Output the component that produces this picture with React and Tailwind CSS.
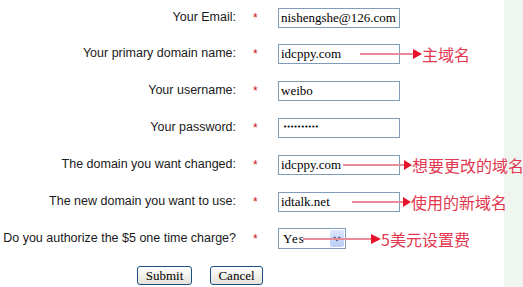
const rows = [
  { label: "Your Email:", value: "nishengshe@126.com", h: "h-[35px]" },
  {
    label: "Your primary domain name:",
    value: "idcppy.com",
    h: "h-[37px]",
    note: { left: 82, line: 53, head: 9, text: "主域名" },
  },
  { label: "Your username:", value: "weibo", h: "h-[37px]" },
  { label: "Your password:", value: "••••••••••", h: "h-[37px]", password: true },
  {
    label: "The domain you want changed:",
    value: "idcppy.com",
    h: "h-[37px]",
    note: { left: 65, line: 61, head: 8, text: "想要更改的域名" },
  },
  {
    label: "The new domain you want to use:",
    value: "idtalk.net",
    h: "h-[37px]",
    note: { left: 74, line: 51, head: 8, text: "使用的新域名" },
  },
];

const Note = ({ note }) => (
  <div
    className="absolute top-1/2 -translate-y-1/2 flex items-center z-10"
    style={{ left: note.left }}
  >
    <svg width={note.line + note.head} height="12" viewBox={`0 0 ${note.line + note.head} 12`}>
      <line x1="0" y1="6" x2={note.line + 1} y2="6" stroke="#e98c9a" strokeWidth="2" />
      <polygon points={`${note.line},1 ${note.line + note.head},6 ${note.line},11`} fill="#e5132c" />
    </svg>
    <span
      className="text-[16px] leading-none text-[#e2374f] whitespace-nowrap"
      style={{ fontFamily: '"Noto Sans CJK SC", sans-serif' }}
    >
      {note.text}
    </span>
  </div>
);

const Label = ({ children }) => (
  <div className="w-[236px] text-right text-[12.5px] text-[#1a1a1a] whitespace-nowrap font-['Liberation_Sans',sans-serif]">
    {children}
  </div>
);

const Star = () => (
  <div className="w-[42px] pl-[17px] text-[12px] text-[#cc1122] font-['Liberation_Sans',sans-serif]">*</div>
);

export default function App() {
  return (
    <div className="flex w-[523px] h-[287px] overflow-hidden bg-white">
      <div className="w-[504px] flex flex-col">
        {rows.map((r) => (
          <div key={r.label} className={`${r.h} shrink-0 flex items-center`}>
            <Label>{r.label}</Label>
            <Star />
            <div className="relative">
              <div className="w-[122px] h-[20px] border border-[#7f9db9] bg-white flex items-center pl-[2px] overflow-hidden">
                {r.password ? (
                  <span className="pl-[2px] text-[7px] leading-none tracking-[-0.6px] text-black font-['DejaVu_Sans',sans-serif]">
                    {r.value}
                  </span>
                ) : (
                  <span className="text-[13px] leading-none text-black font-['Liberation_Serif',serif] whitespace-nowrap">
                    {r.value}
                  </span>
                )}
              </div>
              {r.note && <Note note={r.note} />}
            </div>
          </div>
        ))}

        <div className="h-[37px] shrink-0 flex items-center">
          <Label>Do you authorize the $5 one time charge?</Label>
          <Star />
          <div className="relative">
            <div className="w-[68px] h-[21px] border border-[#7f9db9] bg-white flex items-center">
              <span className="pl-[4px] text-[13px] leading-none tracking-[1px] text-black font-['Liberation_Serif',serif]">
                Yes
              </span>
              <div className="ml-auto mr-[1px] w-[14px] h-[17px] bg-linear-to-b from-[#dbe5fd] to-[#bccef8] rounded-[2px] flex items-center justify-center">
                <svg width="8" height="6" viewBox="0 0 8 6">
                  <path d="M1 1 L4 4 L7 1" fill="none" stroke="#4d6185" strokeWidth="2" />
                </svg>
              </div>
            </div>
            <Note note={{ left: 25, line: 68, head: 10, text: "5美元设置费" }} />
          </div>
        </div>

        <div className="h-[37px] shrink-0 flex items-center pl-[137px] gap-[18px]">
          <button className="w-[55px] h-[19px] border border-[#1c4f83] rounded-[3px] bg-linear-to-b from-white to-[#e4e2d8] text-[13px] leading-none text-black font-['Liberation_Serif',serif]">
            Submit
          </button>
          <button className="w-[53px] h-[19px] border border-[#1c4f83] rounded-[3px] bg-linear-to-b from-white to-[#e4e2d8] text-[13px] leading-none text-black font-['Liberation_Serif',serif]">
            Cancel
          </button>
        </div>
      </div>
      <div className="w-[19px] h-[287px] bg-[#eff6ef]" />
    </div>
  );
}
